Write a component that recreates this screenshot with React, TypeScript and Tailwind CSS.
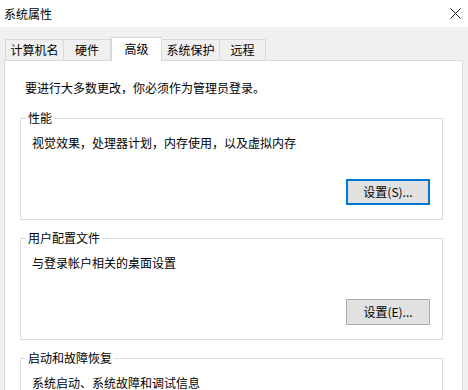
import React from "react";

const tabs = ["计算机名", "硬件", "高级", "系统保护", "远程"];
const tabWidths = ["w-[59px]", "w-[47px]", "w-[51px]", "w-[58px]", "w-[46px]"];

const GroupBox = ({
  title,
  text,
  button,
  focused,
  className,
}: {
  title: string;
  text: string;
  button?: string;
  focused?: boolean;
  className?: string;
}) => {
  return (
    <fieldset className={`border border-[#dcdcdc] ml-[15px] mr-[19px] ${className ?? ""}`}>
      <legend className="ml-[5px] px-[2px] h-4 leading-4">{title}</legend>
      <div className="pl-[11px] pr-[12px]">
        <div className="mt-[9px] h-4 leading-4">{text}</div>
        {button && (
          <div className="flex justify-end mt-[28px] pb-[14px]">
            <button
              className={`w-[84px] h-[26px] bg-[#e1e1e1] leading-4 ${
                focused ? "border-2 border-[#0078d7]" : "border border-[#adadad]"
              }`}
            >
              {button}
            </button>
          </div>
        )}
      </div>
    </fieldset>
  );
};

const App = () => {
  return (
    <div
      className="w-[468px] h-[390px] overflow-hidden bg-[#f0f0f0] text-[12px] text-black"
      style={{ fontFamily: '"Noto Sans CJK SC", "Noto Sans", sans-serif' }}
    >
      <div className="h-[27px] bg-white flex items-center justify-between pl-[4px] pr-[6px]">
        <span className="leading-4">系统属性</span>
        <svg width="11" height="11" viewBox="0 0 11 11" className="mr-[1px]">
          <path d="M0.5 0.5 L10.5 10.5 M10.5 0.5 L0.5 10.5" stroke="#222" strokeWidth="1" />
        </svg>
      </div>

      <div className="h-[33px] flex items-end pl-[5px]">
        {tabs.map((t, i) =>
          t === "高级" ? (
            <div
              key={t}
              className={`${tabWidths[i]} h-[24px] -mb-px relative z-10 bg-white border border-b-0 border-[#d9d9d9] flex items-start justify-center pt-[2px]`}
            >
              {t}
            </div>
          ) : (
            <div
              key={t}
              className={`${tabWidths[i]} h-[21px] bg-[#f0f0f0] border border-b-0 border-[#d9d9d9] flex items-center justify-center ${
                i === 1 || i === 3 || i === 4 ? "border-l-0" : ""
              }`}
            >
              {t}
            </div>
          )
        )}
      </div>

      <div className="ml-[4px] w-[459px] h-[340px] bg-white border border-[#d9d9d9]">
        <div className="pt-[19px] pl-[20px] h-4 leading-4 box-content">
          要进行大多数更改，你必须作为管理员登录。
        </div>
        <GroupBox
          className="mt-[14px]"
          title="性能"
          text="视觉效果，处理器计划，内存使用，以及虚拟内存"
          button="设置(S)..."
          focused
        />
        <GroupBox
          className="mt-[10px]"
          title="用户配置文件"
          text="与登录帐户相关的桌面设置"
          button="设置(E)..."
        />
        <GroupBox
          className="mt-[10px] h-[80px]"
          title="启动和故障恢复"
          text="系统启动、系统故障和调试信息"
        />
      </div>
    </div>
  );
};

export default App;
